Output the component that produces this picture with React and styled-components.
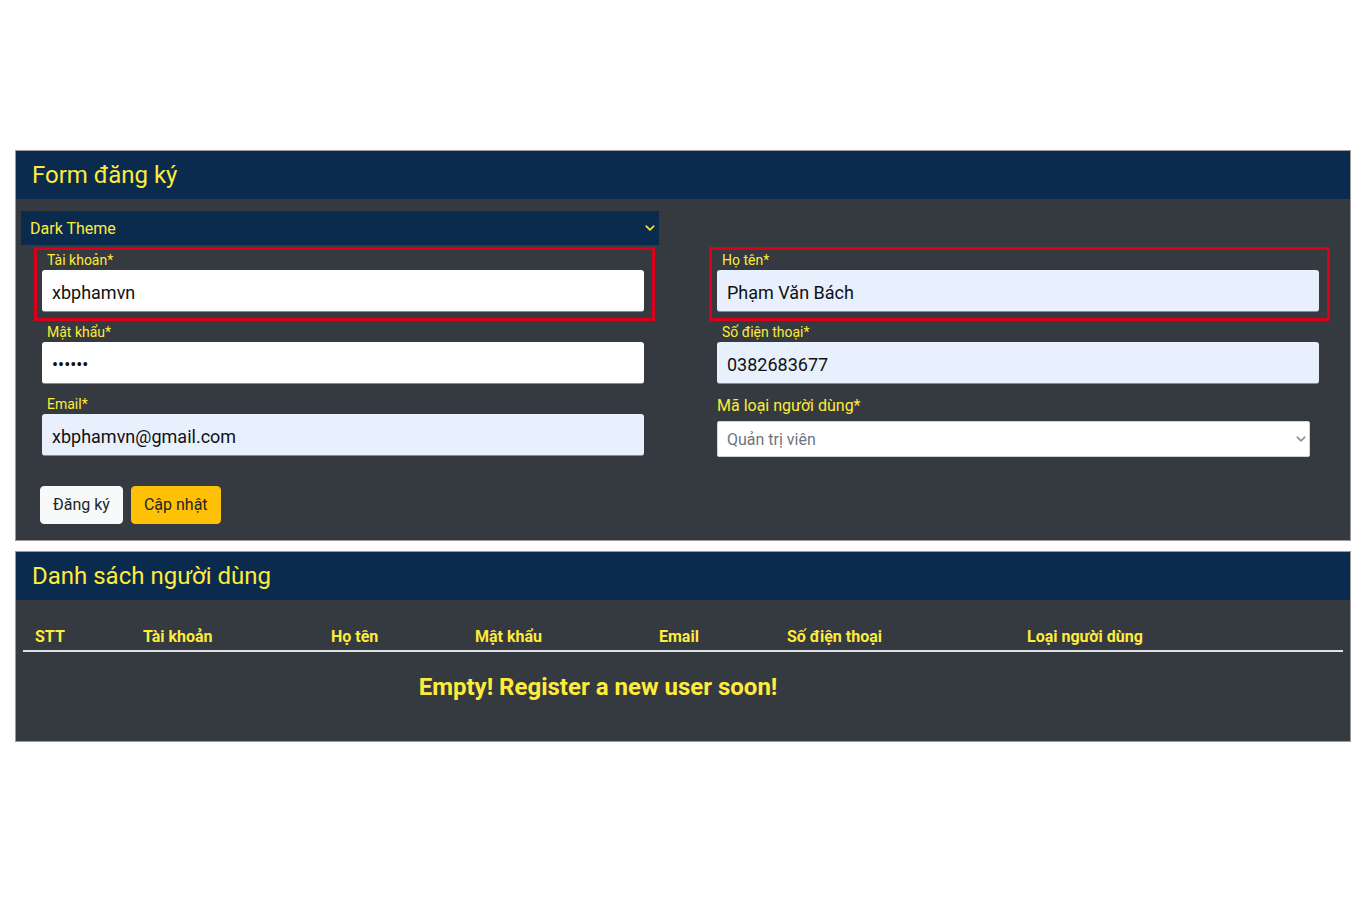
import React from "react";
import styled, { createGlobalStyle } from "styled-components";

const Global = createGlobalStyle`
  * { box-sizing: border-box; }
  body { margin: 0; background: #ffffff; font-family: Roboto, "Noto Sans", "Liberation Sans", sans-serif; }
`;

const Page = styled.div`
  padding: 150px 15px 0;
  display: flex;
  flex-direction: column;
  gap: 10px;
`;

const Card = styled.section`
  border: 1px solid #9a9a9a;
  background: #343a40;
`;

const CardHeader = styled.header`
  background: #0a2b4e;
  padding: 9px 16px;
  height: 48px;
`;

const Title = styled.h2`
  margin: 0;
  font-size: 24px;
  line-height: 30px;
  font-weight: 400;
  color: #ffeb3b;
`;

const FormBody = styled.div`
  padding: 12px 20px 16px 5px;
`;

const SelectWrap = styled.div`
  position: relative;
  width: ${(p) => p.$w}px;
`;

const Chevron = styled.svg`
  position: absolute;
  right: ${(p) => p.$right}px;
  top: 50%;
  transform: translateY(-50%);
  pointer-events: none;
`;

const ThemeSelect = styled.select`
  appearance: none;
  width: 100%;
  height: 34px;
  background: #0a2b4e;
  color: #ffeb3b;
  border: none;
  border-radius: 0;
  padding: 0 9px;
  font-family: Roboto, sans-serif;
  font-size: 16px;
`;

const Grid = styled.div`
  display: grid;
  grid-template-columns: 621px 621px;
  column-gap: 54px;
  margin-top: 2px;
  margin-left: 13px;
`;

const Column = styled.div`
  display: flex;
  flex-direction: column;
`;

const Field = styled.div`
  position: relative;
  height: 72px;
  padding: 4px 11px 7px 8px;

  &::after {
    content: "";
    display: ${(p) => (p.$hl ? "block" : "none")};
    position: absolute;
    inset: 0 0 -2px 0;
    border: 3px solid #d9001b;
    pointer-events: none;
  }
`;

const Label = styled.label`
  display: block;
  font-size: 14px;
  line-height: 19px;
  color: #ffeb3b;
  padding-left: 5px;
`;

const Input = styled.input`
  display: block;
  width: 100%;
  height: 42px;
  border: none;
  border-bottom: 1px solid #8a8a8a;
  border-radius: 3px;
  padding: 4px 10px 0;
  font-family: Roboto, sans-serif;
  font-size: 18px;
  color: #111;
  background: ${(p) => (p.$auto ? "#e8f0fe" : "#ffffff")};
  outline: none;
`;

const PlainField = styled.div`
  height: 72px;
  padding: 5px 0 0 8px;
`;

const PlainLabel = styled.label`
  display: block;
  font-size: 16px;
  line-height: 19px;
  color: #ffeb3b;
  margin-bottom: 6px;
`;

const TypeSelect = styled.select`
  appearance: none;
  width: 100%;
  height: 36px;
  background: #ffffff;
  color: #6c757d;
  border: 1px solid #ced4da;
  border-radius: 2px;
  padding: 0 9px;
  font-family: Roboto, sans-serif;
  font-size: 16px;
`;

const Actions = styled.div`
  display: flex;
  gap: 8px;
  margin: 23px 0 0 19px;
`;

const Button = styled.button`
  height: 38px;
  padding: 0 12px;
  border: 1px solid ${(p) => (p.$warn ? "#ffc107" : "#f8f9fa")};
  border-radius: 4px;
  background: ${(p) => (p.$warn ? "#ffc107" : "#f8f9fa")};
  color: #212529;
  font-family: Roboto, sans-serif;
  font-size: 16px;
  line-height: 24px;
`;

const TableBody = styled.div`
  padding: 21px 7px 26px;
`;

const Table = styled.table`
  width: 1320px;
  border-collapse: collapse;
  table-layout: fixed;
`;

const Th = styled.th`
  width: ${(p) => p.$w}px;
  text-align: left;
  padding: 4px 12px 1px;
  font-size: 16px;
  line-height: 24px;
  font-weight: 700;
  color: #ffeb3b;
  border-bottom: 2px solid #dee2e6;
`;

const EmptyCell = styled.td`
  text-align: center;
  padding: 21px 182px 13px 12px;
  font-size: 24px;
  line-height: 29px;
  font-weight: 700;
  color: #ffeb3b;
`;

const ChevronIcon = ({ color, right, size = 10 }) => (
  <Chevron $right={right} width={size} height={size} viewBox="0 0 16 16">
    <path d="M2 5l6 6 6-6" fill="none" stroke={color} strokeWidth="2.4" strokeLinecap="round" strokeLinejoin="round" />
  </Chevron>
);

const columns = [
  ["STT", 108],
  ["Tài khoản", 188],
  ["Họ tên", 144],
  ["Mật khẩu", 184],
  ["Email", 128],
  ["Số điện thoại", 240],
  ["Loại người dùng", 328],
];

export default function App() {
  return (
    <>
      <Global />
      <Page>
        <Card>
          <CardHeader>
            <Title>Form đăng ký</Title>
          </CardHeader>
          <FormBody>
            <SelectWrap $w={638}>
              <ThemeSelect defaultValue="dark">
                <option value="dark">Dark Theme</option>
                <option value="light">Light Theme</option>
              </ThemeSelect>
              <ChevronIcon color="#ffeb3b" right={4} />
            </SelectWrap>
            <Grid>
              <Column>
                <Field $hl>
                  <Label>Tài khoản*</Label>
                  <Input defaultValue="xbphamvn" />
                </Field>
                <Field>
                  <Label>Mật khẩu*</Label>
                  <Input type="password" defaultValue="123456" />
                </Field>
                <Field>
                  <Label>Email*</Label>
                  <Input $auto defaultValue="xbphamvn@gmail.com" />
                </Field>
              </Column>
              <Column>
                <Field $hl>
                  <Label>Họ tên*</Label>
                  <Input $auto defaultValue="Phạm Văn Bách" />
                </Field>
                <Field>
                  <Label>Số điện thoại*</Label>
                  <Input $auto defaultValue="0382683677" />
                </Field>
                <PlainField>
                  <PlainLabel>Mã loại người dùng*</PlainLabel>
                  <SelectWrap $w={593}>
                    <TypeSelect defaultValue="admin">
                      <option value="admin">Quản trị viên</option>
                      <option value="user">Khách hàng</option>
                    </TypeSelect>
                    <ChevronIcon color="#8a8f94" right={4} />
                  </SelectWrap>
                </PlainField>
              </Column>
            </Grid>
            <Actions>
              <Button>Đăng ký</Button>
              <Button $warn>Cập nhật</Button>
            </Actions>
          </FormBody>
        </Card>
        <Card>
          <CardHeader>
            <Title>Danh sách người dùng</Title>
          </CardHeader>
          <TableBody>
            <Table>
              <thead>
                <tr>
                  {columns.map(([name, w]) => (
                    <Th key={name} $w={w}>{name}</Th>
                  ))}
                </tr>
              </thead>
              <tbody>
                <tr>
                  <EmptyCell colSpan={7}>Empty! Register a new user soon!</EmptyCell>
                </tr>
              </tbody>
            </Table>
          </TableBody>
        </Card>
      </Page>
    </>
  );
}
